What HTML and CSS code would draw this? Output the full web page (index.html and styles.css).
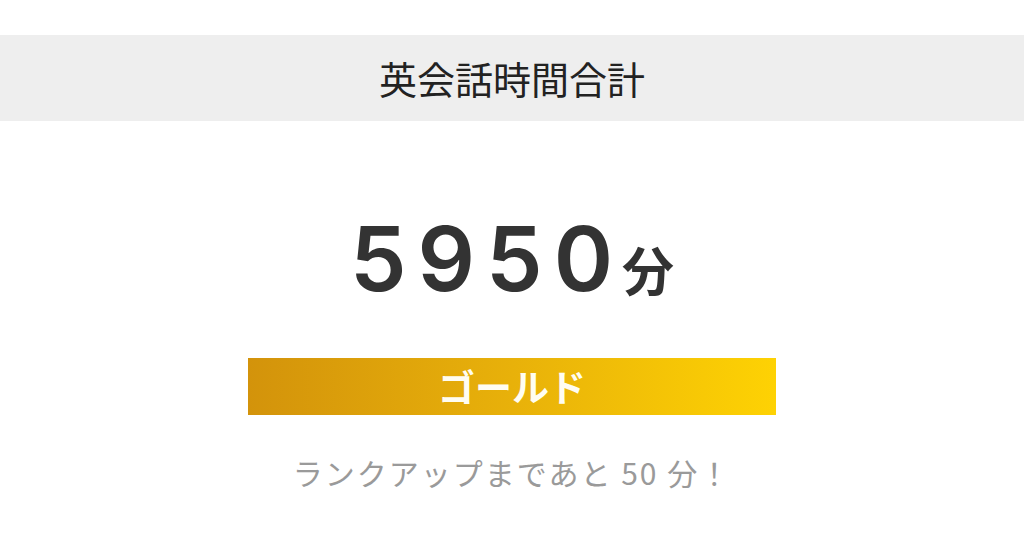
FILE: index.html
```html
<!DOCTYPE html>
<html lang="ja">
<head>
<meta charset="utf-8">
<link rel="stylesheet" href="styles.css">
</head>
<body>
<div class="page">
  <header class="band"><h1 class="title">英会話時間合計</h1></header>
  <div class="total"><span class="num">5950</span><span class="unit">分</span></div>
  <div class="rank">ゴールド</div>
  <p class="next">ランクアップまであと 50 分！</p>
</div>
</body>
</html>
```
FILE: styles.css
```css
html, body { margin: 0; padding: 0; background: #fff; }
.page {
  width: 1024px; height: 533px;
  display: flex; flex-direction: column; align-items: center;
  font-family: "Noto Sans CJK JP", sans-serif;
}
.band {
  margin-top: 35px; width: 100%; height: 86px;
  background: #eeeeee;
  display: flex; align-items: center; justify-content: center;
}
.title {
  margin: 0; font-size: 38px; font-weight: 400; color: #222;
  line-height: 1;
}
.total {
  margin-top: 88px; height: 100px;
  display: flex; align-items: baseline; justify-content: center;
  color: #333;
}
.num {
  font-family: Inter, "Liberation Sans", sans-serif;
  font-weight: 600; font-size: 90px; letter-spacing: 11px; line-height: 100px;
}
.unit { font-size: 52px; font-weight: 700; margin-left: -2px; }
.rank {
  margin-top: 49px; width: 528px; height: 57px;
  background: linear-gradient(to right, #d3930b 0%, #e8b10a 50%, #fed203 100%);
  color: #fffdf2; font-size: 37px; font-weight: 700;
  display: flex; align-items: center; justify-content: center;
  line-height: 1;
}
.next {
  margin: 40px 0 0; font-size: 30px; color: #9a9a9a; line-height: 34px;
  font-weight: 400; letter-spacing: 2px;
}
```
